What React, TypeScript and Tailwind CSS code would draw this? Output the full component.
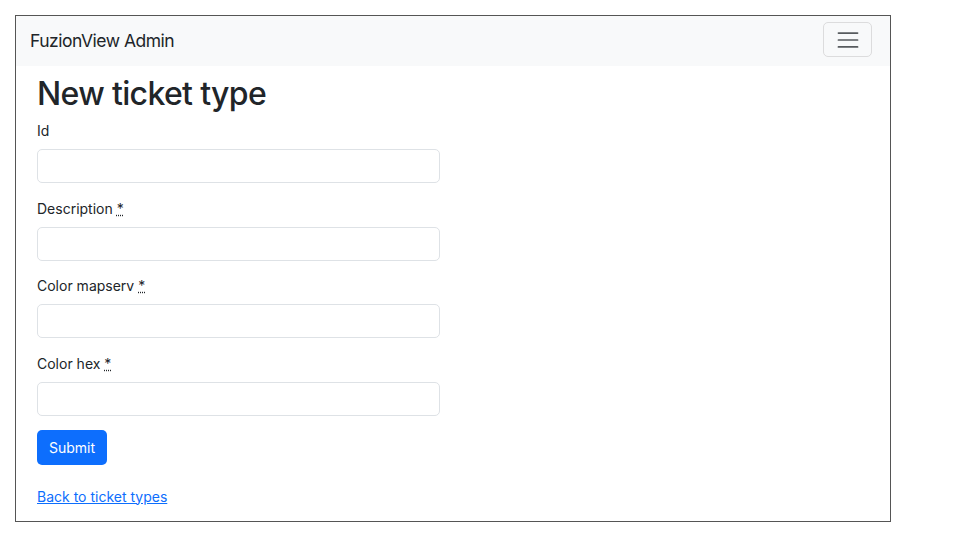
import React from "react";

const fields = [
  { id: "id", label: "Id", required: false },
  { id: "description", label: "Description", required: true },
  { id: "color_mapserv", label: "Color mapserv", required: true },
  { id: "color_hex", label: "Color hex", required: true },
];

export default function App() {
  return (
    <div className="min-h-[540px] bg-white font-['Inter','Liberation_Sans',sans-serif] text-[#212529]">
      <div className="m-[15px] w-[876px] border border-[#555]">
        <nav className="flex h-[50px] items-center justify-between bg-[#f8f9fa] pl-[14px] pr-[18px]">
          <span className="text-[17.5px] leading-[26px] tracking-[-0.5px]">FuzionView Admin</span>
          <button className="mb-[3px] flex h-[35px] w-[49px] items-center justify-center rounded-[5px] border border-[#dcdcdd]">
            <svg width="26" height="26" viewBox="0 0 30 30">
              <path
                d="M4 7h22M4 15h22M4 23h22"
                stroke="rgba(33,37,41,0.75)"
                strokeWidth="2"
                strokeLinecap="round"
              />
            </svg>
          </button>
        </nav>

        <main className="pl-[21px] pt-[9px]">
          <h1 className="mb-[7px] text-[32px] font-medium leading-[38px] tracking-[-0.65px]">
            New ticket type
          </h1>

          <form>
            {fields.map((f) => (
              <div key={f.id} className="mb-[14.5px]">
                <label htmlFor={f.id} className="mb-[8px] block text-[14px] leading-[21px]">
                  {f.label}
                  {f.required && (
                    <>
                      {" "}
                      <abbr title="required" className="cursor-help underline decoration-dotted">
                        *
                      </abbr>
                    </>
                  )}
                </label>
                <input
                  id={f.id}
                  type="text"
                  className="block h-[34px] w-[403px] rounded-[5px] border border-[#dee2e6] px-[10px] text-[14px]"
                />
              </div>
            ))}
            <button
              type="submit"
              className="mt-[-0.5px] h-[35px] w-[70px] rounded-[5px] bg-[#0d6efd] text-[14px] leading-[21px] text-white"
            >
              Submit
            </button>
          </form>

          <p className="mb-[14px] mt-[21px] text-[14px] leading-[21px]">
            <a href="#" className="text-[#0d6efd] underline">
              Back to ticket types
            </a>
          </p>
        </main>
      </div>
    </div>
  );
}
